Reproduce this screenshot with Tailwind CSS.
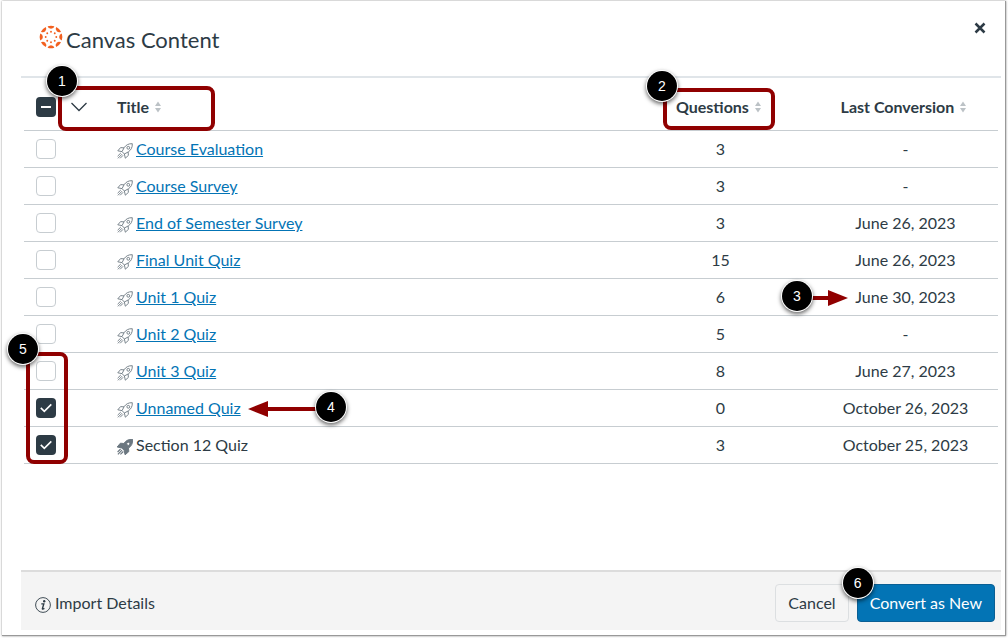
<!DOCTYPE html>
<html lang="en">
<head>
<meta charset="utf-8">
<meta name="viewport" content="width=device-width, initial-scale=1">
<title>Canvas Content</title>
<script src="https://cdn.jsdelivr.net/npm/@tailwindcss/browser@4"></script>
</head>
<body class="min-h-screen bg-white font-['Lato',sans-serif] text-base text-[#2d3b45]">
<svg class="hidden" aria-hidden="true">
  <symbol id="rocket" viewBox="0 0 16 16">
    <path d="M15.300.7C11.500.5 9 2 7.200 4.600L5 8.600 7.400 11 11.400 8.800C14 7 15.500 4.500 15.300.7ZM7 4.900 3.600 4.600.8 7.800 5 8.600M11.100 9 11.400 12.400 8.300 15.200 7.400 11" stroke-width=".9" stroke-linejoin="round"/>
    <circle cx="11.300" cy="4.800" r="1.400" stroke-width=".9"/>
    <path d="M3.800 10 .6 13.200M5 11.200.9 15.300M6.100 12.300l-3 3" stroke-width=".9"/>
  </symbol>
  <symbol id="rocket-solid" viewBox="0 0 16 16">
    <path fill="currentColor" fill-rule="evenodd" d="M15.700.3C11.500.1 8.700 1.700 6.900 4.500L3.400 4.200.2 8 4.700 8.900 7.100 11.300 8.100 15.800 11.800 12.600 11.500 9.100C14.300 7.300 15.900 4.500 15.700.3ZM11.300 3.200a1.600 1.600 0 1 1 0 3.200 1.600 1.600 0 0 1 0-3.200Z"/>
    <path d="M3.600 10 .6 13M5 11.200.9 15.300M6.300 12.500l-2.900 2.900" stroke-width="1.100"/>
  </symbol>
  <symbol id="sort" viewBox="0 0 6 12">
    <path d="M3 .5 6 5H0ZM3 11.500 6 7H0Z" fill="#bcc2c6"/>
  </symbol>
  <symbol id="check" viewBox="0 0 20 20">
    <path d="M4.800 9.900 8.300 13.400 15.300 6.400" fill="none" stroke="#fff" stroke-width="1.600"/>
  </symbol>
  <symbol id="ray" viewBox="0 0 24 24">
    <path d="M8.600 1.200A11.300 11.300 0 0 1 15.400 1.200A3.500 3.500 0 0 1 8.600 1.200Z"/><circle cx="12" cy="6.700" r=".95"/>
  </symbol>
</svg>

<main class="mx-0.5 mt-px flex h-[calc(100vh-3px)] flex-col border-r border-b border-[#999] pr-1 pb-[5px] pl-[19px] shadow-[0_0_2px_#888]">
  <header class="flex h-[77px] shrink-0 items-start justify-between border-b-2 border-[#e0e5e9] pt-6 pr-3.5 pl-[18px]">
    <h1 class="flex items-start gap-[3px] text-[22px] leading-[30px]">
      <svg class="size-6" viewBox="0 0 24 24" fill="#f2601f" aria-hidden="true">
        <use href="#ray"/><use href="#ray" transform="rotate(45 12 12)"/><use href="#ray" transform="rotate(90 12 12)"/><use href="#ray" transform="rotate(135 12 12)"/><use href="#ray" transform="rotate(180 12 12)"/><use href="#ray" transform="rotate(225 12 12)"/><use href="#ray" transform="rotate(270 12 12)"/><use href="#ray" transform="rotate(315 12 12)"/>
      </svg>
      Canvas Content
    </h1>
    <button type="button" aria-label="Close" class="-mt-1 grid size-3.5 place-items-center">
      <svg class="size-3" viewBox="0 0 12 12" fill="none" stroke="#2d3b45" stroke-width="2.500"><path d="M1.500 1.500l9 9M10.500 1.500l-9 9"/></svg>
    </button>
  </header>

  <div class="grow px-[3px]">
    <table class="w-full table-fixed border-separate border-spacing-0 [&_td]:h-[37px] [&_td]:border-b [&_td]:border-[#c7cdd1] [&_td]:p-0 [&_th]:h-[53px] [&_th]:border-b [&_th]:border-[#c7cdd1] [&_th]:px-0 [&_th]:pt-1.5 [&_th]:pb-0">
      <colgroup><col class="w-11"><col class="w-[49px]"><col><col class="w-[19%]"><col class="w-[19%]"></colgroup>
      <thead>
        <tr>
          <th class="pl-3!">
            <label class="grid size-5"><input type="checkbox" checked aria-label="Select all quizzes" class="col-start-1 row-start-1 size-5 appearance-none rounded-sm bg-[#2d3b45]"><svg class="pointer-events-none col-start-1 row-start-1 size-5" viewBox="0 0 20 20"><path d="M5 9h10v2H5z" fill="#fff"/></svg></label>
          </th>
          <th class="relative">
            <button type="button" aria-label="Selection options" class="ml-0.5 block"><svg class="h-2.5 w-[18px]" viewBox="0 0 18 10" fill="none" stroke="#2d3b45" stroke-width="1.300"><path d="M1.500 1 9 8.500 16.500 1"/></svg></button>
            <span class="pointer-events-none absolute top-2 -left-2.5 z-10 h-[45px] w-[157px] rounded-lg border-4 border-[#900000]"></span>
            <span class="absolute -top-3 -left-[21px] z-20 grid size-[30px] place-items-center rounded-full bg-black font-['Liberation_Sans',sans-serif] text-sm font-normal text-white shadow-[0_0_0_1px_#fff,0_2px_4px_1px_#0009]">1</span>
          </th>
          <th class="text-left"><button type="button" class="flex items-center gap-1.5 font-bold">Title <svg class="h-3 w-1.5"><use href="#sort"/></svg></button></th>
          <th class="relative">
            <button type="button" class="mx-auto flex items-center gap-1.5 pr-1 font-bold">Questions <svg class="h-3 w-1.5"><use href="#sort"/></svg></button>
            <span class="pointer-events-none absolute top-2.5 left-[35px] z-10 h-[42px] w-28 rounded-lg border-4 border-[#900000]"></span>
            <span class="absolute -top-[7px] left-[19px] z-20 grid size-[30px] place-items-center rounded-full bg-black font-['Liberation_Sans',sans-serif] text-sm font-normal text-white shadow-[0_0_0_1px_#fff,0_2px_4px_1px_#0009]">2</span>
          </th>
          <th><button type="button" class="mx-auto flex items-center gap-1.5 pr-1 font-bold">Last Conversion <svg class="h-3 w-1.5"><use href="#sort"/></svg></button></th>
        </tr>
      </thead>
      <tbody class="text-center">
        <tr>
          <td class="pl-3!"><input type="checkbox" aria-label="Course Evaluation" class="block size-5 appearance-none rounded-sm border border-[#c7cdd1] bg-white"></td><td></td>
          <td><div class="flex items-center gap-[3px]"><svg class="mt-1 size-4 fill-none stroke-[#6b7780]"><use href="#rocket"/></svg><a href="#" class="text-[#0374b5] underline">Course Evaluation</a></div></td>
          <td>3</td><td>-</td>
        </tr>
        <tr>
          <td class="pl-3!"><input type="checkbox" aria-label="Course Survey" class="block size-5 appearance-none rounded-sm border border-[#c7cdd1] bg-white"></td><td></td>
          <td><div class="flex items-center gap-[3px]"><svg class="mt-1 size-4 fill-none stroke-[#6b7780]"><use href="#rocket"/></svg><a href="#" class="text-[#0374b5] underline">Course Survey</a></div></td>
          <td>3</td><td>-</td>
        </tr>
        <tr>
          <td class="pl-3!"><input type="checkbox" aria-label="End of Semester Survey" class="block size-5 appearance-none rounded-sm border border-[#c7cdd1] bg-white"></td><td></td>
          <td><div class="flex items-center gap-[3px]"><svg class="mt-1 size-4 fill-none stroke-[#6b7780]"><use href="#rocket"/></svg><a href="#" class="text-[#0374b5] underline">End of Semester Survey</a></div></td>
          <td>3</td><td>June 26, 2023</td>
        </tr>
        <tr>
          <td class="pl-3!"><input type="checkbox" aria-label="Final Unit Quiz" class="block size-5 appearance-none rounded-sm border border-[#c7cdd1] bg-white"></td><td></td>
          <td><div class="flex items-center gap-[3px]"><svg class="mt-1 size-4 fill-none stroke-[#6b7780]"><use href="#rocket"/></svg><a href="#" class="text-[#0374b5] underline">Final Unit Quiz</a></div></td>
          <td>15</td><td>June 26, 2023</td>
        </tr>
        <tr>
          <td class="pl-3!"><input type="checkbox" aria-label="Unit 1 Quiz" class="block size-5 appearance-none rounded-sm border border-[#c7cdd1] bg-white"></td><td></td>
          <td><div class="flex items-center gap-[3px]"><svg class="mt-1 size-4 fill-none stroke-[#6b7780]"><use href="#rocket"/></svg><a href="#" class="text-[#0374b5] underline">Unit 1 Quiz</a></div></td>
          <td>6</td>
          <td class="relative">June 30, 2023
            <svg class="absolute top-[11px] -left-1 h-4 w-10" viewBox="0 0 40 16" fill="#900000"><path d="M0 6h19V0l20 8-20 8v-6H0z"/></svg>
            <span class="absolute top-0.5 -left-[31px] z-20 grid size-[30px] place-items-center rounded-full bg-black font-['Liberation_Sans',sans-serif] text-sm text-white shadow-[0_0_0_1px_#fff,0_2px_4px_1px_#0009]">3</span>
          </td>
        </tr>
        <tr>
          <td class="pl-3!"><input type="checkbox" aria-label="Unit 2 Quiz" class="block size-5 appearance-none rounded-sm border border-[#c7cdd1] bg-white"></td><td></td>
          <td><div class="flex items-center gap-[3px]"><svg class="mt-1 size-4 fill-none stroke-[#6b7780]"><use href="#rocket"/></svg><a href="#" class="text-[#0374b5] underline">Unit 2 Quiz</a></div></td>
          <td>5</td><td>-</td>
        </tr>
        <tr>
          <td class="relative pl-3!"><input type="checkbox" aria-label="Unit 3 Quiz" class="block size-5 appearance-none rounded-sm border border-[#c7cdd1] bg-white">
            <span class="pointer-events-none absolute -top-px left-0.5 z-10 h-28 w-[42px] rounded-lg border-4 border-[#900000]"></span>
            <span class="absolute -top-[19px] -left-4 z-20 grid size-[30px] place-items-center rounded-full bg-black font-['Liberation_Sans',sans-serif] text-sm text-white shadow-[0_0_0_1px_#fff,0_2px_4px_1px_#0009]">5</span>
          </td><td></td>
          <td><div class="flex items-center gap-[3px]"><svg class="mt-1 size-4 fill-none stroke-[#6b7780]"><use href="#rocket"/></svg><a href="#" class="text-[#0374b5] underline">Unit 3 Quiz</a></div></td>
          <td>8</td><td>June 27, 2023</td>
        </tr>
        <tr>
          <td class="pl-3!"><label class="grid size-5"><input type="checkbox" checked aria-label="Unnamed Quiz" class="col-start-1 row-start-1 size-5 appearance-none rounded-sm bg-[#2d3b45]"><svg class="pointer-events-none col-start-1 row-start-1 size-5"><use href="#check"/></svg></label></td><td></td>
          <td class="relative"><div class="flex items-center gap-[3px]"><svg class="mt-1 size-4 fill-none stroke-[#6b7780]"><use href="#rocket"/></svg><a href="#" class="text-[#0374b5] underline">Unnamed Quiz</a></div>
            <svg class="absolute top-[11px] left-[131px] h-4 w-[72px]" viewBox="0 0 72 16" fill="#900000"><path d="M72 6H20V0L0 8l20 8v-6h52z"/></svg>
            <span class="absolute top-0.5 left-[199px] z-20 grid size-[30px] place-items-center rounded-full bg-black font-['Liberation_Sans',sans-serif] text-sm text-white shadow-[0_0_0_1px_#fff,0_2px_4px_1px_#0009]">4</span>
          </td>
          <td>0</td><td>October 26, 2023</td>
        </tr>
        <tr>
          <td class="pl-3!"><label class="grid size-5"><input type="checkbox" checked aria-label="Section 12 Quiz" class="col-start-1 row-start-1 size-5 appearance-none rounded-sm bg-[#2d3b45]"><svg class="pointer-events-none col-start-1 row-start-1 size-5"><use href="#check"/></svg></label></td><td></td>
          <td><div class="flex items-center gap-[3px]"><svg class="mt-1 size-4 stroke-[#6b7780] text-[#6b7780]"><use href="#rocket-solid"/></svg>Section 12 Quiz</div></td>
          <td>3</td><td>October 25, 2023</td>
        </tr>
      </tbody>
    </table>
  </div>

  <footer class="flex h-[60px] shrink-0 items-center justify-between border-t-2 border-[#dcdcdc] bg-[#f4f4f4] pt-1 pr-1.5 pl-3.5">
    <button type="button" class="flex items-center gap-1">
      <svg class="mt-1 size-4" viewBox="0 0 16 16" fill="none" stroke="#2d3b45" aria-hidden="true"><circle cx="8" cy="8" r="7.400" stroke-width=".9"/><circle cx="9.200" cy="4.200" r="1.200" fill="#2d3b45" stroke="none"/><path d="M6.300 6.900H8.800L7.400 11.600Q7.200 12.700 9.400 11.400" stroke-width="1.400"/></svg>
      Import Details
    </button>
    <div class="flex gap-2">
      <button type="button" class="h-[38px] rounded border border-[#dcdfe1] bg-[#f5f5f5] px-3">Cancel</button>
      <div class="relative">
        <button type="button" class="h-[38px] rounded border border-[#0a5f94] bg-[#0374b5] px-3 text-white">Convert as New</button>
        <span class="absolute -top-4 -left-3.5 z-20 grid size-[30px] place-items-center rounded-full bg-black font-['Liberation_Sans',sans-serif] text-sm text-white shadow-[0_0_0_1px_#fff,0_2px_4px_1px_#0009]">6</span>
      </div>
    </div>
  </footer>
</main>
</body>
</html>
